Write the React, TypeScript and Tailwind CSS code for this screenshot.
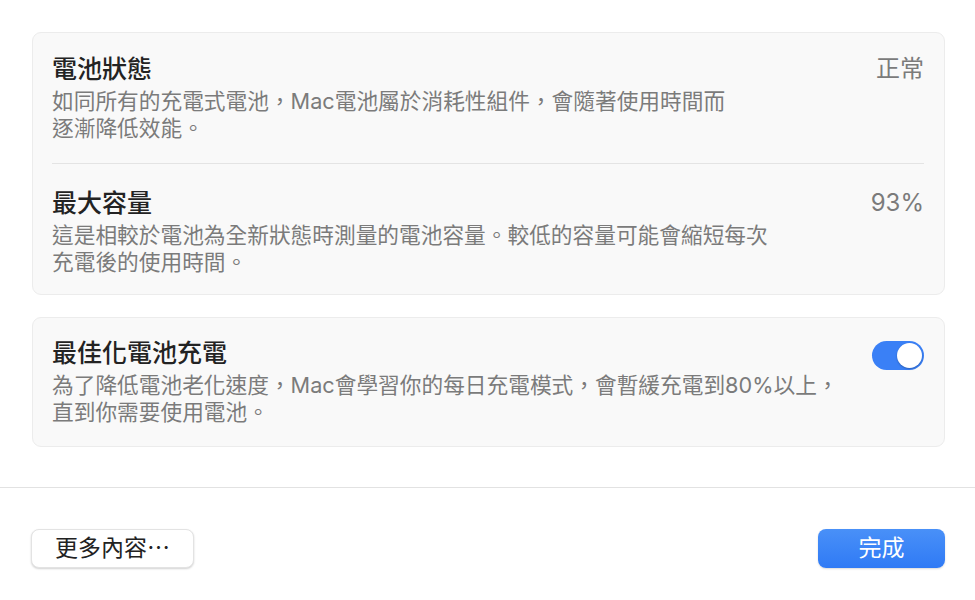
const font = { fontFamily: '"Inter", "Noto Sans CJK TC", sans-serif' };

const Toggle = ({ on }: { on: boolean }) => (
  <div
    className={`w-[52px] h-[29px] rounded-full p-[2px] flex ${
      on ? "bg-[#3a80f6] justify-end" : "bg-[#e2e2e2] justify-start"
    }`}
  >
    <div className="w-[25px] h-[25px] rounded-full bg-white shadow-[0_1px_2px_rgba(0,0,0,0.25)]" />
  </div>
);

interface RowProps {
  title: string;
  desc: string[];
  right?: React.ReactNode;
  className?: string;
}

const Row = ({ title, desc, right, className }: RowProps) => (
  <div className={`flex items-start justify-between ${className ?? ""}`}>
    <div>
      <div className="text-[25px] leading-[30px] font-medium text-[#232323]">{title}</div>
      <div className="mt-[4px] text-[21.7px] leading-[27px] text-[#7b7b7b]">
        {desc.map((line) => (
          <div key={line}>{line}</div>
        ))}
      </div>
    </div>
    {right}
  </div>
);

export default function App() {
  return (
    <div className="w-[975px] h-[600px] bg-white flex flex-col overflow-hidden" style={font}>
      <div className="pl-[32px] pr-[30px] pt-[32px]">
        <div className="rounded-[9px] border border-[#ececec] bg-[#f9f9f9] pl-[19px] pr-[20px]">
          <Row
            className="pt-[21px] pb-[21px] border-b border-[#e4e4e4]"
            title="電池狀態"
            desc={[
              "如同所有的充電式電池，Mac電池屬於消耗性組件，會隨著使用時間而",
              "逐漸降低效能。",
            ]}
            right={<div className="text-[24px] leading-[30px] text-[#7b7b7b]">正常</div>}
          />
          <Row
            className="pt-[24px] pb-[18px]"
            title="最大容量"
            desc={[
              "這是相較於電池為全新狀態時測量的電池容量。較低的容量可能會縮短每次",
              "充電後的使用時間。",
            ]}
            right={<div className="text-[24px] leading-[30px] text-[#7b7b7b]">93%</div>}
          />
        </div>

        <div className="mt-[22px] rounded-[9px] border border-[#ececec] bg-[#f9f9f9] pl-[19px] pr-[20px]">
          <Row
            className="pt-[20px] pb-[20px]"
            title="最佳化電池充電"
            desc={[
              "為了降低電池老化速度，Mac會學習你的每日充電模式，會暫緩充電到80%以上，",
              "直到你需要使用電池。",
            ]}
            right={
              <div className="pt-[3px]">
                <Toggle on />
              </div>
            }
          />
        </div>
      </div>

      <div className="mt-[40px] border-t border-[#e2e2e2]" />

      <div className="flex items-center justify-between pl-[31px] pr-[30px] pt-[41px]">
        <button
          type="button"
          className="h-[39px] w-[163px] rounded-[8px] bg-white border border-[#e3e3e3] shadow-[0_1px_2px_rgba(0,0,0,0.18)] text-[23px] text-[#222] flex items-center justify-center"
        >
          更多內容⋯
        </button>
        <button
          type="button"
          className="h-[39px] w-[127px] rounded-[8px] bg-gradient-to-b from-[#4990f8] to-[#2f7af5] shadow-[0_1px_2px_rgba(0,0,0,0.15)] text-[23px] text-white flex items-center justify-center"
        >
          完成
        </button>
      </div>
    </div>
  );
}
